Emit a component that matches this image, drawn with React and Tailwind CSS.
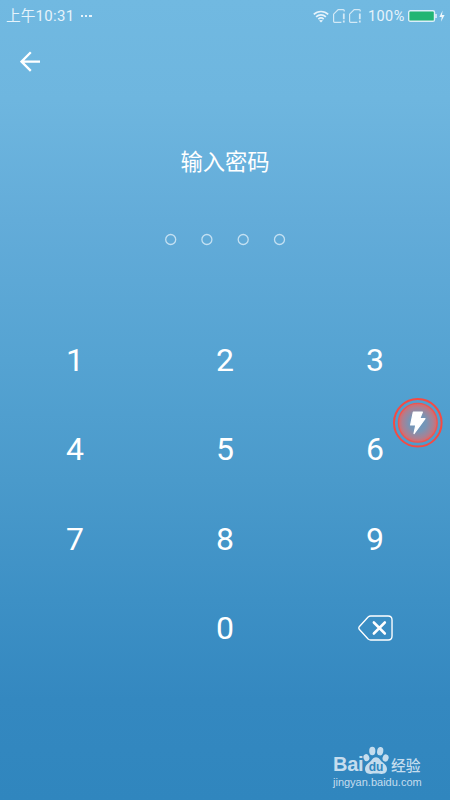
import React from "react";

const KEYS = ["1", "2", "3", "4", "5", "6", "7", "8", "9"];

function Wifi() {
  return (
    <svg className="h-[13px] w-[16px]" viewBox="0 0 16 13" fill="none" stroke="#e6f3fb" strokeWidth="1.7">
      <path d="M0.8 4.4C4.8 0.5 11.2 0.5 15.2 4.4" />
      <path d="M3.1 6.8C5.9 4.2 10.1 4.2 12.9 6.8" />
      <path d="M5.3 9.1C6.9 7.7 9.1 7.7 10.7 9.1" />
      <path d="M8 12.5L6 10.6C7.2 9.7 8.8 9.7 10 10.6Z" fill="#e6f3fb" stroke="none" />
    </svg>
  );
}

function Sim() {
  return (
    <svg className="h-[14px] w-[12px]" viewBox="0 0 12 14" fill="none" stroke="#d3e9f6" strokeWidth="1.2">
      <path d="M11.2 2.6V1.6Q11.2 0.6 10.2 0.6H5.2L0.6 5.2V12.3Q0.6 13.3 1.6 13.3H8.4" />
      <path d="M10.8 4.4V10.2M10.8 11.6V13.6" strokeWidth="1.8" />
    </svg>
  );
}

function StatusBar() {
  return (
    <header className="flex h-8 items-center justify-between pl-[6px] pr-[5px] text-[#e6f3fb]">
      <div className="flex items-center">
        <span className="text-[14.7px] leading-8">上午</span>
        <span className="text-[15px] leading-8 tracking-[0.35px]">10:31</span>
        <span className="ml-[6px] flex gap-[2px]">
          <i className="h-[2px] w-[2.4px] bg-[#e6f3fb]" />
          <i className="h-[2px] w-[2.4px] bg-[#e6f3fb]" />
          <i className="h-[2px] w-[2.4px] bg-[#e6f3fb]" />
        </span>
      </div>
      <div className="flex items-center">
        <Wifi />
        <span className="ml-[4px] flex gap-[4px]">
          <Sim />
          <Sim />
        </span>
        <span className="ml-[7px] w-[38px] pt-px text-[14.5px] leading-8 tracking-[0.4px]">100%</span>
        <svg className="ml-[2px] h-[12px] w-[37px]" viewBox="0 0 37 12">
          <rect x="0.7" y="0.7" width="25.8" height="10.6" rx="1.6" fill="#22b573" stroke="#dceefa" strokeWidth="1.4" />
          <path d="M27.2 4H28.8V8H27.2Z" fill="#dceefa" />
          <path d="M34.6 0.4L31.4 6.9H33.7L33 11.8L36.6 5.1H34Z" fill="#eef7fc" />
        </svg>
      </div>
    </header>
  );
}

function Watermark() {
  return (
    <footer className="flex w-[117px] flex-col self-end text-[#c5ddee]">
      <div className="flex h-[29px] items-end">
        <span className="w-[30px] text-[20px] font-bold leading-[21px] tracking-[-0.3px] [font-family:'Liberation_Sans',sans-serif]">
          Bai
        </span>
        <svg className="h-[29px] w-[26px]" viewBox="0 0 26 29" fill="#c5ddee">
          <ellipse cx="3.4" cy="11.6" rx="2.9" ry="3.6" transform="rotate(-18 3.4 11.6)" />
          <ellipse cx="9.3" cy="5" rx="3.1" ry="4.2" />
          <ellipse cx="17.2" cy="5.2" rx="3.1" ry="4.2" transform="rotate(10 17.2 5.2)" />
          <ellipse cx="22.6" cy="12" rx="3" ry="3.7" transform="rotate(15 22.6 12)" />
          <path d="M13 11.3C9.8 11.3 9 14.4 6.5 16.3C3.8 18.3 2 20.1 2 23C2 26.4 4.5 28.2 7.8 27.9C11 27.5 15 27.5 18.2 27.9C21.6 28.2 24 26.3 24 23C24 20 22 18.3 19.5 16.3C17 14.3 16.2 11.3 13 11.3Z" />
          <text x="13" y="25" textAnchor="middle" fontFamily="Liberation Sans, sans-serif" fontSize="12" fontWeight="bold" fill="#3187bf">du</text>
        </svg>
        <span className="ml-[2px] whitespace-nowrap text-[14.8px] font-medium leading-[20px] [font-family:'Noto_Sans_CJK_SC',sans-serif]">经验</span>
      </div>
      <span className="text-[11px] font-medium leading-[14px] [font-family:'Liberation_Sans',sans-serif]">jingyan.baidu.com</span>
    </footer>
  );
}

export default function App() {
  return (
    <main className="relative flex h-[800px] w-[450px] flex-col overflow-hidden bg-[linear-gradient(180deg,#71b9e1_0px,#6eb6df_100px,#63acd9_220px,#55a3d2_360px,#4a9acb_480px,#3d90c5_600px,#3488c0_700px,#3086be_800px)] text-white [font-family:Roboto,'Noto_Sans_CJK_SC',sans-serif]">
      <StatusBar />
      <button className="ml-5 mt-[19px] h-[22px] w-[22px]" aria-label="返回">
        <svg viewBox="0 0 22 22" fill="none" stroke="white" strokeWidth="2.3">
          <path d="M10.8 1.3L1.5 10.6L10.8 19.9M1.6 10.6H20" />
        </svg>
      </button>
      <h1 className="mt-[73px] h-8 text-center text-[22.3px] leading-8">输入密码</h1>
      <div className="mt-[55px] flex justify-center">
        <svg className="h-[13px] w-[122px]" viewBox="0 0 122 13" fill="none" stroke="#c3e0f2" strokeWidth="1.3">
          <circle cx="6.7" cy="6.5" r="5" />
          <circle cx="42.9" cy="6.5" r="5" />
          <circle cx="79.2" cy="6.5" r="5" />
          <circle cx="115.5" cy="6.5" r="5" />
        </svg>
      </div>
      <section className="mt-[69px] grid auto-rows-[89.5px] grid-cols-3 text-[32px]">
        {KEYS.map((k) => (
          <button key={k} className="flex items-center justify-center">{k}</button>
        ))}
        <span />
        <button className="flex items-center justify-center">0</button>
        <button className="flex items-center justify-center pl-px" aria-label="删除">
          <svg className="h-[26px] w-[35px]" viewBox="0 0 36 26" preserveAspectRatio="none" fill="none" stroke="white">
            <path d="M13 1H31Q35 1 35 5V21Q35 25 31 25H13Q11.6 25 10.4 24L1.5 14.6Q0.2 13 1.5 11.4L10.4 2Q11.6 1 13 1Z" strokeWidth="1.4" />
            <path d="M16.3 7.5L27.6 18.5M27.6 7.5L16.3 18.5" strokeWidth="2.6" strokeLinecap="round" />
          </svg>
        </button>
      </section>
      <div className="mt-[73px] flex justify-end">
        <Watermark />
      </div>
      <svg className="absolute left-[392px] top-[397px] h-[52px] w-[52px]" viewBox="0 0 52 52">
        <defs>
          <radialGradient id="glow">
            <stop offset="0" stopColor="#6699c0" />
            <stop offset="0.45" stopColor="#7994b4" />
            <stop offset="0.8" stopColor="#ab8092" />
            <stop offset="1" stopColor="#df6767" />
          </radialGradient>
        </defs>
        <circle cx="25.8" cy="25.8" r="23.8" fill="none" stroke="#f54a43" strokeWidth="2" />
        <circle cx="25.8" cy="25.8" r="19.4" fill="url(#glow)" stroke="#ee5550" strokeWidth="1.3" />
        <path d="M21.3 15H30.4L27.8 21.6H33L22 36.6L23.8 28H18.6Z" fill="white" stroke="white" strokeWidth="1.2" strokeLinejoin="round" />
      </svg>
    </main>
  );
}
